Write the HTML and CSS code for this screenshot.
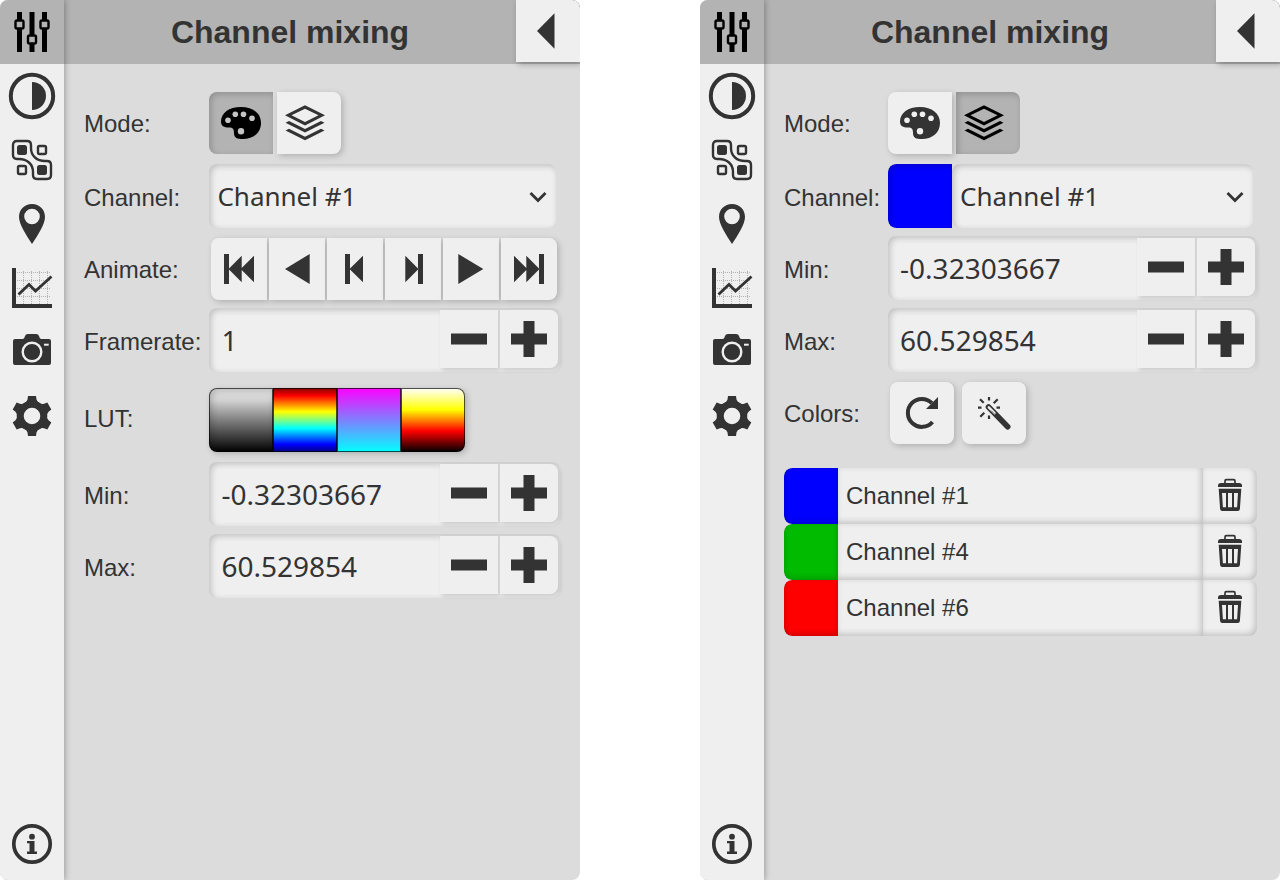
FILE: index.html
```html
<!DOCTYPE html>
<html lang="en">
<head>
<meta charset="utf-8">
<meta name="viewport" content="width=device-width, initial-scale=1">
<title>Channel mixing</title>
<link rel="stylesheet" href="styles.css">
</head>
<body>
<svg class="sprite" aria-hidden="true">
  <symbol id="sliders" viewBox="0 0 64 64">
    <path d="M17 12h5v40h-5zM29.500 12h5v40h-5zM42 12h5v40h-5z" fill="currentColor"/>
    <g fill="#b3b3b3" stroke="currentColor" stroke-width="2.400"><rect x="15.500" y="20.500" width="8" height="8" rx="1.500"/><rect x="28" y="35.500" width="8" height="8" rx="1.500"/><rect x="40.500" y="20.500" width="8" height="8" rx="1.500"/></g>
  </symbol>
  <symbol id="contrast" viewBox="0 0 64 64">
    <circle cx="32" cy="32" r="21.200" fill="none" stroke="currentColor" stroke-width="4"/>
    <path d="M32 18a14 14 0 0 1 0 28z" fill="currentColor"/>
  </symbol>
  <symbol id="cluster" viewBox="0 0 64 64">
    <g fill="none" stroke="currentColor" stroke-width="2.400">
      <path d="M17 13H27Q31 13 31 17V20C31 28 37 33 45 33H47Q51 33 51 37V47Q51 51 47 51H37Q33 51 33 47V44C33 36 27 31 19 31H17Q13 31 13 27V17Q13 13 17 13Z"/>
      <rect x="38" y="18" width="8" height="8" rx="1.500"/><rect x="18" y="38" width="8" height="8" rx="1.500"/>
    </g>
    <rect x="17" y="17" width="10" height="10" rx="2.500" fill="currentColor"/><rect x="37" y="37" width="10" height="10" rx="2.500" fill="currentColor"/>
  </symbol>
  <symbol id="pin" viewBox="0 0 64 64">
    <path fill="currentColor" fill-rule="evenodd" d="M32 12C39.500 12 45 17.500 45 25C45 32 38 43 32 52C26 43 19 32 19 25C19 17.500 24.500 12 32 12ZM32 16.700a7.800 7.800 0 1 0 0 15.600a7.800 7.800 0 1 0 0-15.600Z"/>
  </symbol>
  <symbol id="chart" viewBox="0 0 64 64">
    <path d="M23.500 15v33M31.500 15v33M39.500 15v33M47.500 15v33M17 16.500h34M17 24.500h34M17 32.500h34M17 40.500h34" stroke="#b4b4b4" stroke-dasharray="1 1" fill="none"/>
    <path d="M12 12h4v36h36v4H12z" fill="currentColor"/>
    <path d="M18.500 38.500L29 28.500L35.500 35L51.500 20.500" fill="none" stroke="currentColor" stroke-width="2.800"/>
  </symbol>
  <symbol id="camera" viewBox="0 0 64 64">
    <path d="M15 19H23Q24.500 18.500 25 16Q25.500 14 28 14H36Q38.500 14 39 16Q39.500 18.500 41 19H49Q51 19 51 21V43Q51 45 49 45H15Q13 45 13 43V21Q13 19 15 19Z" fill="currentColor"/>
    <circle cx="32" cy="32" r="9.300" fill="none" stroke="#efefef" stroke-width="2.400"/><path d="M44 23.700h4.700v2H44z" fill="#efefef"/>
  </symbol>
  <symbol id="gear" viewBox="0 0 64 64">
    <circle cx="32" cy="32" r="11.800" fill="none" stroke="currentColor" stroke-width="7"/>
    <g fill="currentColor">
      <path id="tooth" d="M28 12H36L36.500 15.500Q37.500 18.500 40 19.500L36 23H28L24 19.500Q26.500 18.500 27.500 15.500Z"/>
      <use href="#tooth" transform="rotate(60 32 32)"/><use href="#tooth" transform="rotate(120 32 32)"/><use href="#tooth" transform="rotate(180 32 32)"/><use href="#tooth" transform="rotate(240 32 32)"/><use href="#tooth" transform="rotate(300 32 32)"/>
    </g>
  </symbol>
  <symbol id="info" viewBox="0 0 64 64">
    <circle cx="32" cy="32" r="18.200" fill="none" stroke="currentColor" stroke-width="3.700"/>
    <circle cx="32" cy="24.700" r="2.900" fill="currentColor"/>
    <path d="M27 29H34.500V39.500H37V42H27V39.500H29.500V31.300H27Z" fill="currentColor"/>
  </symbol>
  <symbol id="back" viewBox="0 0 64 62"><path d="M21 31L38.500 13.300V48.700Z" fill="currentColor"/></symbol>
  <symbol id="palette" viewBox="0 0 64 62">
    <path fill="currentColor" d="M12 29.500C12 21 20 15 32 15C44 15 52 21.500 52 31C52 41 44 47 34 47C28 47 25 46 25 41C25 37 24 35.500 20 35.500C15 35.500 12 34 12 29.500Z"/>
    <g class="hole"><circle cx="19" cy="28.300" r="2.800"/><circle cx="26.300" cy="22.200" r="2.800"/><circle cx="34.500" cy="22.200" r="2.800"/><circle cx="43" cy="26.300" r="2.800"/><circle cx="32" cy="39.300" r="3.200"/></g>
  </symbol>
  <symbol id="layers" viewBox="0 0 64 62">
    <path fill="currentColor" fill-rule="evenodd" d="M8 23.300L28 13.300L48 23.300L28 33.500ZM14.500 23.300L28 30L41.500 23.300L28 16.700Z"/>
    <path fill="currentColor" d="M8.500 30.700L12 29L28 37L44 29L47.500 30.700L28 40.500ZM8.500 38.400L12 36.700L28 44.700L44 36.700L47.500 38.400L28 48.300Z"/>
  </symbol>
  <symbol id="first" viewBox="0 0 56 62"><path d="M13 16h5v30h-5zM17.500 31L30.700 17.700V44.300ZM29.700 31L43 17.700V44.300Z" fill="currentColor"/></symbol>
  <symbol id="reverse" viewBox="0 0 56 62"><path d="M16 31L40.700 16V46Z" fill="currentColor"/></symbol>
  <symbol id="prev" viewBox="0 0 56 62"><path d="M18 16h5v30h-5zM22.500 31L36 17.700V44.300Z" fill="currentColor"/></symbol>
  <symbol id="next" viewBox="0 0 56 62"><path d="M33 16h5v30h-5zM33.500 31L20.300 17.700V44.300Z" fill="currentColor"/></symbol>
  <symbol id="play" viewBox="0 0 56 62"><path d="M40.300 31L15.300 16V46Z" fill="currentColor"/></symbol>
  <symbol id="last" viewBox="0 0 56 62"><path d="M38 16h5v30h-5zM38.500 31L25.300 17.700V44.300ZM26.300 31L13 17.700V44.300Z" fill="currentColor"/></symbol>
  <symbol id="minus" viewBox="0 0 58 58"><path d="M11 23.500h36v11H11z" fill="currentColor"/></symbol>
  <symbol id="plus" viewBox="0 0 58 58"><path d="M11 23.500h36v11H11zM23.500 11h11v36h-11z" fill="currentColor"/></symbol>
  <symbol id="reload" viewBox="0 0 64 62">
    <path d="M42.500 40A14 14 0 1 1 41.900 21.100" fill="none" stroke="currentColor" stroke-width="4"/><path d="M48 15V27H36Z" fill="currentColor"/>
  </symbol>
  <symbol id="wand" viewBox="0 0 64 62">
    <path d="M27 15v3.500M16 25.700h3.500M34.500 25.700h3.500M27 33.500v3.500M18 17.300l3.700 3.500M35.700 17.300l-4 4M18.300 34.700l4-4" stroke="currentColor" stroke-width="2.200" fill="none"/>
    <path d="M26.500 25L45.700 44.800" stroke="currentColor" stroke-width="5.600" stroke-linecap="round"/>
    <path d="M26.800 25.300L32.500 31.200" stroke="#efefef" stroke-width="2.400" stroke-linecap="round"/><path d="M29 28.500L32.500 32" stroke="currentColor" stroke-width=".7"/>
  </symbol>
  <symbol id="trash" viewBox="0 0 54 56">
    <path d="M22 16V13Q22 11.700 23.300 11.700H30.700Q32 11.700 32 13V16" fill="none" stroke="currentColor" stroke-width="1.700"/>
    <path d="M15 19V17.500Q15 15 18 15H36Q39 15 39 17.500V19Z" fill="currentColor"/>
    <path fill="currentColor" fill-rule="evenodd" d="M15.700 20.700H38.300L36.900 41Q36.700 43 34.700 43H19.300Q17.300 43 17.100 41ZM19 25L19.900 39.300H23V25ZM25 25V39.300H29V25ZM31 25V39.300H34.100L35 25Z"/>
  </symbol>
  <symbol id="chevron" viewBox="0 0 20 12"><path d="M2.500 2L10 9.500L17.500 2" fill="none" stroke="currentColor" stroke-width="2.800"/></symbol>
</svg>

<main class="panels">
  <section class="panel" aria-label="Colour map mode">
    <nav class="rail" aria-label="Tools">
      <button class="tool active" aria-label="Channel mixing"><svg><use href="#sliders"/></svg></button>
      <button class="tool" aria-label="Contrast"><svg><use href="#contrast"/></svg></button>
      <button class="tool" aria-label="Clusters"><svg><use href="#cluster"/></svg></button>
      <button class="tool" aria-label="Markers"><svg><use href="#pin"/></svg></button>
      <button class="tool" aria-label="Chart"><svg><use href="#chart"/></svg></button>
      <button class="tool" aria-label="Snapshot"><svg><use href="#camera"/></svg></button>
      <button class="tool" aria-label="Settings"><svg><use href="#gear"/></svg></button>
      <button class="tool about" aria-label="Information"><svg><use href="#info"/></svg></button>
    </nav>
    <div class="pane">
      <header class="head">
        <h1>Channel mixing</h1>
        <button class="collapse" aria-label="Collapse"><svg><use href="#back"/></svg></button>
      </header>
      <form class="fields">
        <span class="label mode-label">Mode:</span>
        <div class="modes" role="group" aria-label="Mode">
          <button type="button" class="mode active" aria-label="Palette"><svg><use href="#palette"/></svg></button>
          <button type="button" class="mode" aria-label="Layers"><svg><use href="#layers"/></svg></button>
        </div>
        <label class="label" for="channel-a">Channel:</label>
        <div class="pick">
          <div class="drop"><select id="channel-a"><option>Channel #1</option><option>Channel #4</option><option>Channel #6</option></select><svg><use href="#chevron"/></svg></div>
        </div>
        <span class="label">Animate:</span>
        <div class="player" role="group" aria-label="Animate">
          <button type="button" aria-label="First"><svg><use href="#first"/></svg></button>
          <button type="button" aria-label="Play backwards"><svg><use href="#reverse"/></svg></button>
          <button type="button" aria-label="Previous"><svg><use href="#prev"/></svg></button>
          <button type="button" aria-label="Next"><svg><use href="#next"/></svg></button>
          <button type="button" aria-label="Play"><svg><use href="#play"/></svg></button>
          <button type="button" aria-label="Last"><svg><use href="#last"/></svg></button>
        </div>
        <label class="label" for="rate">Framerate:</label>
        <div class="spin"><input id="rate" type="text" inputmode="decimal" value="1"><button type="button" aria-label="Decrease"><svg><use href="#minus"/></svg></button><button type="button" aria-label="Increase"><svg><use href="#plus"/></svg></button></div>
        <span class="label">LUT:</span>
        <div class="luts" role="group" aria-label="LUT">
          <button type="button" class="lut grey active" aria-label="Grey"></button>
          <button type="button" class="lut jet" aria-label="Jet"></button>
          <button type="button" class="lut cool" aria-label="Cool"></button>
          <button type="button" class="lut hot" aria-label="Hot"></button>
        </div>
        <label class="label" for="min-a">Min:</label>
        <div class="spin"><input id="min-a" type="text" inputmode="decimal" value="-0.32303667"><button type="button" aria-label="Decrease"><svg><use href="#minus"/></svg></button><button type="button" aria-label="Increase"><svg><use href="#plus"/></svg></button></div>
        <label class="label" for="max-a">Max:</label>
        <div class="spin"><input id="max-a" type="text" inputmode="decimal" value="60.529854"><button type="button" aria-label="Decrease"><svg><use href="#minus"/></svg></button><button type="button" aria-label="Increase"><svg><use href="#plus"/></svg></button></div>
      </form>
    </div>
  </section>

  <section class="panel layered" aria-label="Layer mode">
    <nav class="rail" aria-label="Tools">
      <button class="tool active" aria-label="Channel mixing"><svg><use href="#sliders"/></svg></button>
      <button class="tool" aria-label="Contrast"><svg><use href="#contrast"/></svg></button>
      <button class="tool" aria-label="Clusters"><svg><use href="#cluster"/></svg></button>
      <button class="tool" aria-label="Markers"><svg><use href="#pin"/></svg></button>
      <button class="tool" aria-label="Chart"><svg><use href="#chart"/></svg></button>
      <button class="tool" aria-label="Snapshot"><svg><use href="#camera"/></svg></button>
      <button class="tool" aria-label="Settings"><svg><use href="#gear"/></svg></button>
      <button class="tool about" aria-label="Information"><svg><use href="#info"/></svg></button>
    </nav>
    <div class="pane">
      <header class="head">
        <h1>Channel mixing</h1>
        <button class="collapse" aria-label="Collapse"><svg><use href="#back"/></svg></button>
      </header>
      <form class="fields">
        <span class="label mode-label">Mode:</span>
        <div class="modes" role="group" aria-label="Mode">
          <button type="button" class="mode" aria-label="Palette"><svg><use href="#palette"/></svg></button>
          <button type="button" class="mode active" aria-label="Layers"><svg><use href="#layers"/></svg></button>
        </div>
        <label class="label" for="channel-b">Channel:</label>
        <div class="pick">
          <input class="swatch" type="color" value="#0000ff" aria-label="Channel colour">
          <div class="drop"><select id="channel-b"><option>Channel #1</option><option>Channel #4</option><option>Channel #6</option></select><svg><use href="#chevron"/></svg></div>
        </div>
        <label class="label" for="min-b">Min:</label>
        <div class="spin"><input id="min-b" type="text" inputmode="decimal" value="-0.32303667"><button type="button" aria-label="Decrease"><svg><use href="#minus"/></svg></button><button type="button" aria-label="Increase"><svg><use href="#plus"/></svg></button></div>
        <label class="label" for="max-b">Max:</label>
        <div class="spin"><input id="max-b" type="text" inputmode="decimal" value="60.529854"><button type="button" aria-label="Decrease"><svg><use href="#minus"/></svg></button><button type="button" aria-label="Increase"><svg><use href="#plus"/></svg></button></div>
        <span class="label">Colors:</span>
        <div class="actions">
          <button type="button" aria-label="Reset colors"><svg><use href="#reload"/></svg></button>
          <button type="button" aria-label="Automatic colors"><svg><use href="#wand"/></svg></button>
        </div>
      </form>
      <ul class="channels">
        <li><input class="swatch" type="color" value="#0000ff" aria-label="Colour of channel 1"><span class="name">Channel #1</span><button aria-label="Delete channel 1"><svg><use href="#trash"/></svg></button></li>
        <li><input class="swatch" type="color" value="#00bb00" aria-label="Colour of channel 4"><span class="name">Channel #4</span><button aria-label="Delete channel 4"><svg><use href="#trash"/></svg></button></li>
        <li><input class="swatch" type="color" value="#ff0000" aria-label="Colour of channel 6"><span class="name">Channel #6</span><button aria-label="Delete channel 6"><svg><use href="#trash"/></svg></button></li>
      </ul>
    </div>
  </section>
</main>
</body>
</html>
```

FILE: styles.css
```css
* { box-sizing: border-box; }

:root {
  --ink: #333;
  --face: #efefef;
  --ground: #dcdcdc;
  --pressed: #b3b3b3;
  --inset: inset 2px 2px 6px rgba(0, 0, 0, .2);
  --raise: 2px 2px 6px rgba(0, 0, 0, .2);
}

body {
  margin: 0;
  background: #fff;
  color: var(--ink);
  font: 24px/28px "Liberation Sans", Arial, sans-serif;
}

.sprite { position: absolute; width: 0; height: 0; }

button {
  display: block;
  flex: none;
  margin: 0;
  padding: 0;
  border: 0;
  color: inherit;
  background: var(--face);
  cursor: pointer;
}

button svg { display: block; width: 100%; height: 100%; }

.panels {
  display: grid;
  grid-template-columns: repeat(2, minmax(0, 1fr));
  gap: 120px;
  min-height: 100vh;
}

.panel {
  display: flex;
  overflow: hidden;
  border-radius: 8px;
  background: var(--ground);
}

.rail {
  display: flex;
  flex: none;
  flex-direction: column;
  width: 64px;
  padding-bottom: 4px;
  background: var(--face);
  box-shadow: 1px 0 6px rgba(0, 0, 0, .3);
  z-index: 1;
}

.tool { height: 64px; }
.tool.active { background: var(--pressed); color: #000; }
.about { margin-top: auto; }

.pane { flex: 1; min-width: 0; }

.head {
  display: flex;
  align-items: flex-start;
  height: 64px;
  background: var(--pressed);
}

.head h1 {
  flex: 1;
  margin: 0;
  font-size: 32px;
  line-height: 64px;
  text-align: center;
}

.collapse {
  width: 64px;
  height: 62px;
  border-top-right-radius: 8px;
  box-shadow: 2px 2px 6px rgba(0, 0, 0, .3);
}

.fields {
  display: grid;
  grid-template-columns: auto minmax(0, 1fr);
  gap: 8px;
  align-items: center;
  padding: 28px 20px 0;
}

.layered .fields { padding-right: 23px; }

.label { padding-top: 4px; }
.mode-label { padding-top: 0; }

.modes { display: flex; gap: 4px; height: 64px; }
.mode { width: 64px; height: 62px; box-shadow: var(--raise); --hole: var(--face); }
.mode:first-child { border-radius: 8px 0 0 8px; }
.mode:last-child { border-radius: 0 8px 8px 0; }
.mode.active { background: var(--pressed); color: #000; box-shadow: var(--inset); --hole: #c4c4c4; }
.hole { fill: var(--hole); }

.pick { display: flex; margin-right: 4px; }

.drop { position: relative; flex: 1; min-width: 0; }

.drop select {
  display: block;
  width: 100%;
  height: 64px;
  padding: 0 40px 0 8px;
  border: 0;
  border-radius: 8px;
  appearance: none;
  background: var(--face);
  color: inherit;
  font: 26px "Noto Sans", sans-serif;
  box-shadow: var(--inset);
}

.drop svg {
  position: absolute;
  top: 27px;
  right: 8px;
  width: 20px;
  height: 12px;
  pointer-events: none;
}

.swatch {
  flex: none;
  width: 64px;
  height: 64px;
  padding: 0;
  border: 0;
  border-radius: 8px 0 0 8px;
  appearance: none;
  background: none;
  overflow: hidden;
}

.swatch::-webkit-color-swatch-wrapper { padding: 0; }

.swatch::-webkit-color-swatch {
  border: 0;
  border-radius: 8px 0 0 8px;
  box-shadow: var(--inset);
}

.player {
  display: flex;
  gap: 2px;
  padding: 2px 0 0 2px;
}

.player button { width: 56px; height: 62px; box-shadow: var(--raise); }
.player button:first-child { border-radius: 8px 0 0 8px; }
.player button:last-child { border-radius: 0 8px 8px 0; }

.spin {
  display: flex;
  gap: 2px;
  height: 64px;
  padding: 2px 2px 0 0;
  border-radius: 8px;
  background: var(--face);
  box-shadow: var(--inset);
}

.spin input {
  flex: 1;
  width: 0;
  height: 60px;
  padding: 0 0 0 12px;
  border: 0;
  background: none;
  color: inherit;
  font: 28px "Noto Sans", sans-serif;
}

.spin button { width: 58px; height: 58px; box-shadow: 2px 2px 4px rgba(0, 0, 0, .15); }
.spin button:last-child { border-radius: 0 8px 8px 0; }

.luts {
  display: flex;
  width: max-content;
  margin: 8px 0 2px;
  border-radius: 8px;
  box-shadow: var(--raise);
}

.lut { width: 64px; height: 64px; border: 1px solid rgba(0, 0, 0, .7); background-origin: border-box; }
.lut:first-child { border-radius: 8px 0 0 8px; }
.lut:last-child { border-radius: 0 8px 8px 0; }
.lut.active { box-shadow: var(--inset); }
.grey { background-image: linear-gradient(#e8e8e8, #d0d0d0 20%, #808080 50%, #000); }
.jet { background-image: linear-gradient(#800000, #f00 12%, #ff0 37%, #0ff 63%, #00f 88%, #000080); }
.cool { background-image: linear-gradient(#f0f, #0ff); }
.hot { background-image: linear-gradient(#fff, #ff0 34%, #f00 67%, #000); }

.actions { display: flex; gap: 8px; padding: 2px 0 0 2px; }
.actions button { width: 64px; height: 62px; border-radius: 8px; box-shadow: var(--raise); }

.channels {
  margin: 24px 23px 0 20px;
  padding: 0;
  list-style: none;
}

.channels li { display: flex; height: 56px; }
.channels .swatch { width: 54px; height: 56px; }
.channels .swatch::-webkit-color-swatch { box-shadow: inset 0 -2px 6px rgba(0, 0, 0, .2); }

.name {
  flex: 1;
  padding-left: 8px;
  line-height: 56px;
  background: var(--face);
  box-shadow: inset -2px -2px 6px rgba(0, 0, 0, .2);
}

.channels button {
  width: 54px;
  height: 56px;
  border-radius: 0 8px 8px 0;
  box-shadow: inset -2px -2px 6px rgba(0, 0, 0, .2);
}
```
